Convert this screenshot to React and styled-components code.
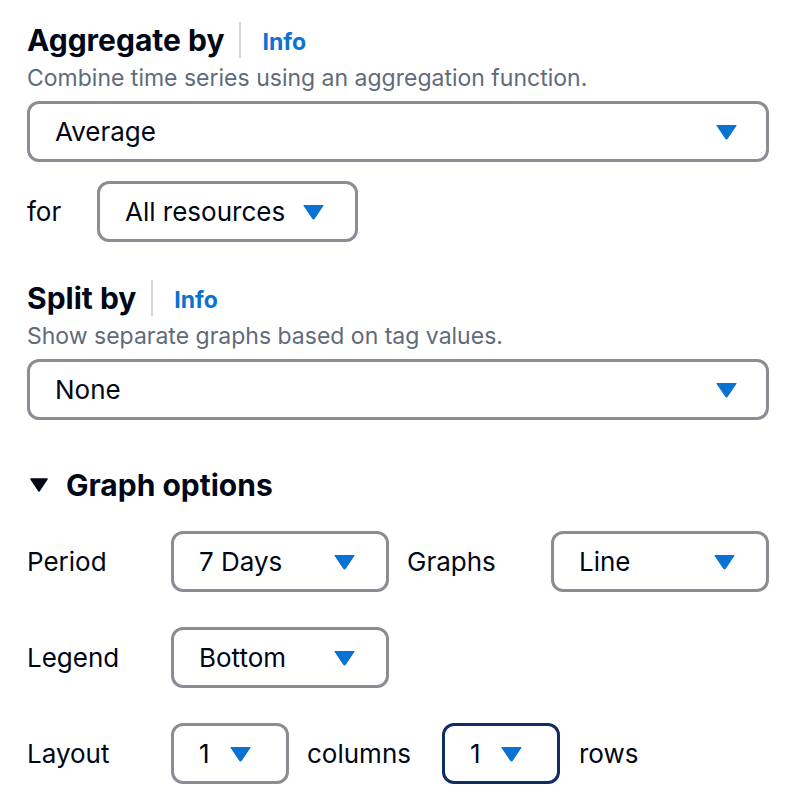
import React from 'react';
import styled, { createGlobalStyle } from 'styled-components';

const GlobalStyle = createGlobalStyle`
  html, body {
    margin: 0;
    padding: 0;
    background: #ffffff;
  }
  body {
    font-family: Inter, "Open Sans", "Liberation Sans", sans-serif;
    color: #000716;
  }
`;

const Page = styled.div`
  width: 804px;
  height: 806px;
  box-sizing: border-box;
  padding: 22px 35px 0 27px;
  display: flex;
  flex-direction: column;
`;

const Field = styled.section`
  display: flex;
  flex-direction: column;
  margin-top: ${p => p.top || 0}px;
`;

const HeadingRow = styled.div`
  display: flex;
  align-items: center;
  height: 36px;
`;

const Heading = styled.h2`
  margin: 0;
  font-size: 30px;
  font-weight: 700;
  line-height: 36px;
  color: #000716;
`;

const Divider = styled.span`
  width: 2px;
  height: 36px;
  background: #d1d5db;
  margin: 0 21px 0 15px;
`;

const InfoLink = styled.a`
  font-size: 23px;
  font-weight: 700;
  color: #0972d3;
  text-decoration: none;
  padding-top: 3px;
`;

const Description = styled.p`
  margin: 6px 0 0;
  font-size: 23px;
  line-height: 28px;
  color: #5f6b7a;
`;

const SelectBox = styled.div`
  box-sizing: border-box;
  display: flex;
  align-items: center;
  justify-content: space-between;
  height: 61px;
  width: ${p => (p.width ? `${p.width}px` : '100%')};
  margin-top: ${p => p.top || 0}px;
  padding: 0 ${p => p.right || 29}px 0 25px;
  border: 3px solid ${p => (p.focused ? '#0f2d63' : '#8c8c94')};
  border-radius: 12px;
  background: #fff;
  font-size: 26px;
  color: #000716;
  flex-shrink: 0;
`;

const Caret = () => (
  <svg width="21" height="16" viewBox="0 0 21 16">
    <path d="M1 1.5 H20 L11.4 14.2 Q10.5 15.4 9.6 14.2 Z" fill="#0972d3" stroke="#0972d3" strokeWidth="1.2" strokeLinejoin="round" />
  </svg>
);

const Select = ({ value, ...rest }) => (
  <SelectBox {...rest}>
    <span>{value}</span>
    <Caret />
  </SelectBox>
);

const InlineRow = styled.div`
  display: flex;
  align-items: center;
  margin-top: ${p => p.top || 0}px;
`;

const RowLabel = styled.span`
  font-size: 26px;
  color: #000716;
  width: ${p => (p.width ? `${p.width}px` : 'auto')};
  margin: 0 ${p => p.gap || 0}px 0 ${p => p.lead || 0}px;
  flex-shrink: 0;
`;

const ExpandHeader = styled.div`
  display: flex;
  align-items: center;
  height: 36px;
  margin-top: 47px;
  gap: 18px;
  padding-left: 3px;
`;

const OptionsGrid = styled.div`
  display: flex;
  flex-direction: column;
  gap: 35px;
  margin-top: 28px;
`;

export default function App() {
  return (
    <>
      <GlobalStyle />
      <Page>
        <Field>
          <HeadingRow>
            <Heading>Aggregate by</Heading>
            <Divider />
            <InfoLink href="#">Info</InfoLink>
          </HeadingRow>
          <Description>Combine time series using an aggregation function.</Description>
          <Select value="Average" top={9} />
          <InlineRow top={19}>
            <RowLabel width={70}>for</RowLabel>
            <Select value="All resources" width={261} right={31} />
          </InlineRow>
        </Field>

        <Field top={38}>
          <HeadingRow>
            <Heading>Split by</Heading>
            <Divider />
            <InfoLink href="#">Info</InfoLink>
          </HeadingRow>
          <Description>Show separate graphs based on tag values.</Description>
          <Select value="None" top={9} />
        </Field>

        <ExpandHeader>
          <svg width="18" height="14" viewBox="0 0 18 14">
            <path d="M1 1 H17 L9 13 Z" fill="#000716" stroke="#000716" strokeWidth="1.5" strokeLinejoin="round" />
          </svg>
          <Heading>Graph options</Heading>
        </ExpandHeader>

        <OptionsGrid>
          <InlineRow>
            <RowLabel width={144}>Period</RowLabel>
            <Select value="7 Days" width={218} right={31} />
            <RowLabel width={144} lead={18}>Graphs</RowLabel>
            <Select value="Line" width={218} right={31} />
          </InlineRow>
          <InlineRow>
            <RowLabel width={144}>Legend</RowLabel>
            <Select value="Bottom" width={218} right={31} />
          </InlineRow>
          <InlineRow>
            <RowLabel width={144}>Layout</RowLabel>
            <Select value="1" width={118} right={35} />
            <RowLabel width={135} lead={18}>columns</RowLabel>
            <Select value="1" width={118} right={35} focused />
            <RowLabel lead={19}>rows</RowLabel>
          </InlineRow>
        </OptionsGrid>
      </Page>
    </>
  );
}
